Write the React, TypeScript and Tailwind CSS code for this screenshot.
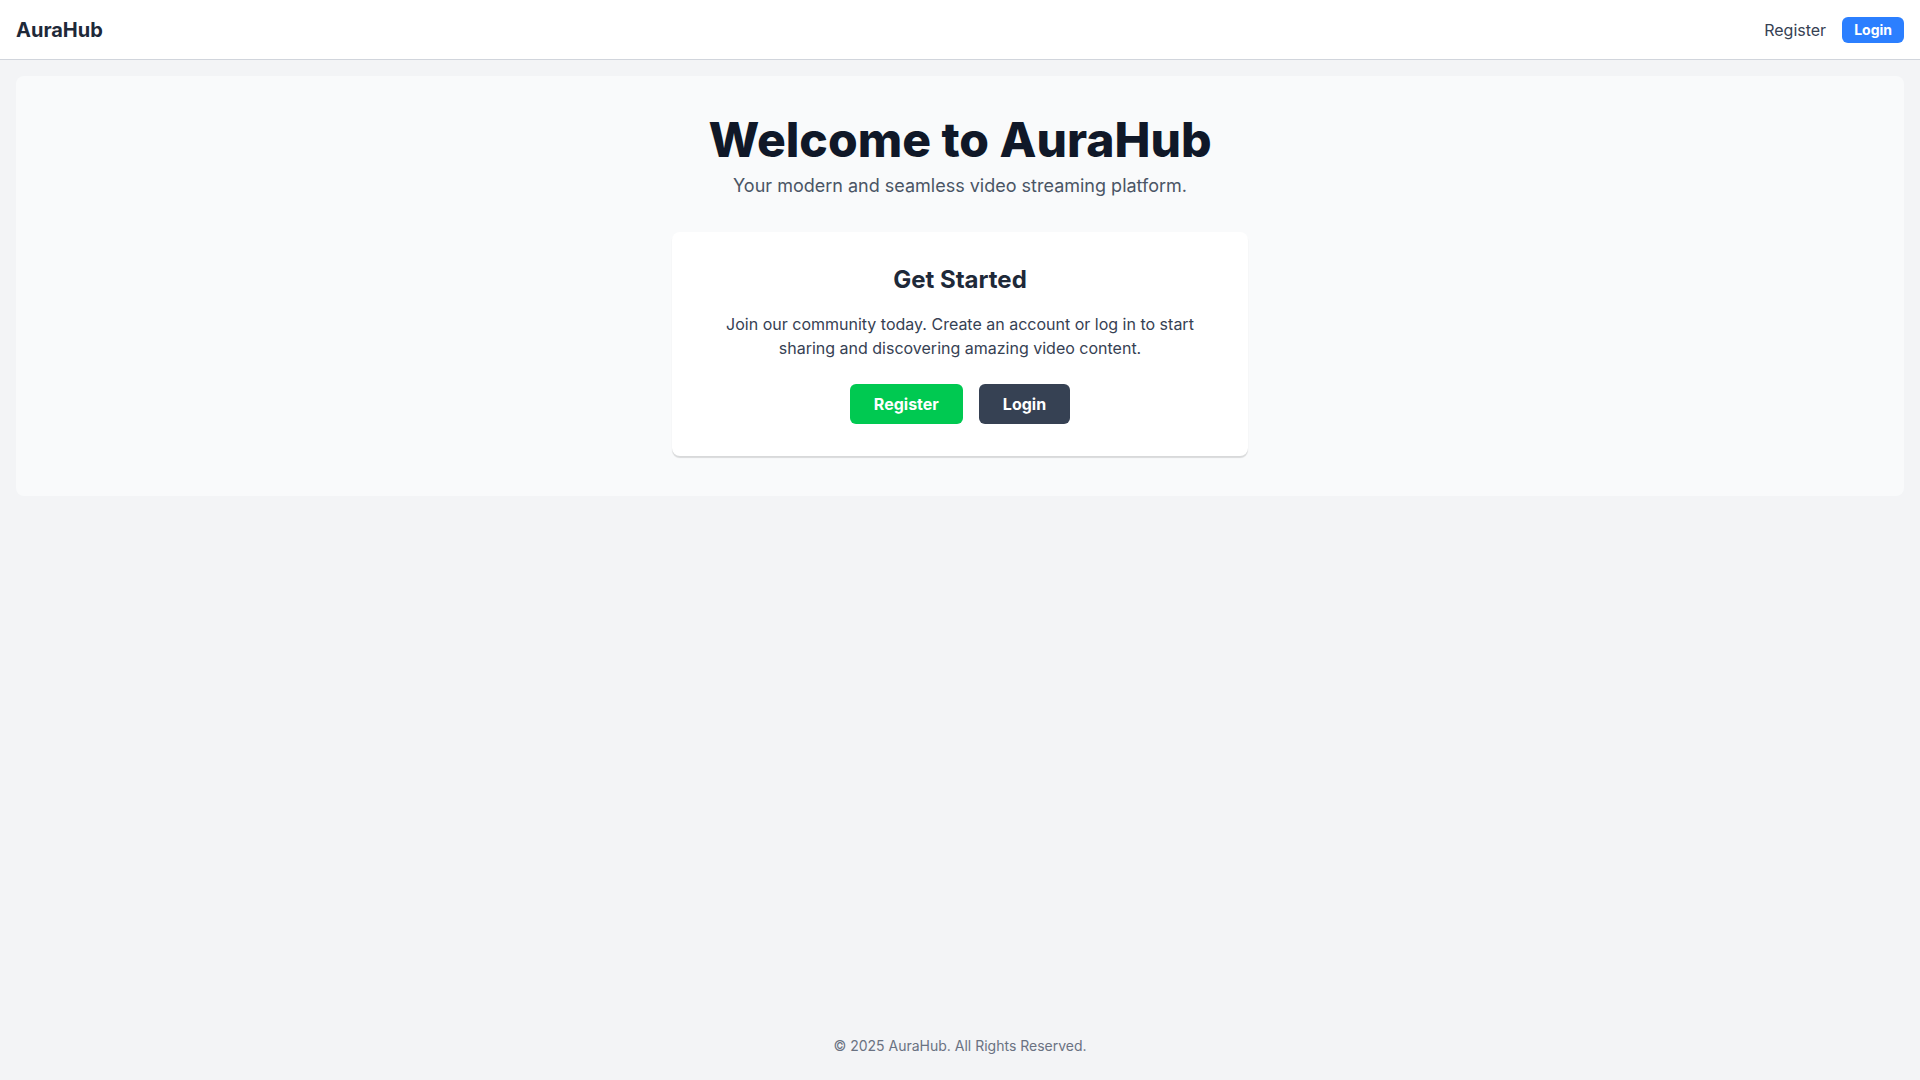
import React from "react";

const Header: React.FC = () => (
  <header className="flex h-[60px] items-center justify-between border-b border-gray-300 bg-white px-4">
    <a href="#" className="text-xl font-bold text-gray-800">
      AuraHub
    </a>
    <nav className="flex items-center gap-4">
      <a href="#" className="text-base text-gray-700">
        Register
      </a>
      <a
        href="#"
        className="flex h-[26px] items-center rounded-md bg-blue-500 px-3 text-sm font-bold text-white"
      >
        Login
      </a>
    </nav>
  </header>
);

const GetStartedCard: React.FC = () => (
  <div className="mx-auto mt-8 w-full max-w-xl rounded-lg bg-white p-8 text-center shadow-[0_2px_1px_0_rgba(0,0,0,0.13)]">
    <h2 className="mb-4 text-2xl font-bold text-gray-800">Get Started</h2>
    <p className="mb-6 text-base leading-6 text-gray-700">
      Join our community today. Create an account or log in to start sharing
      and discovering amazing video content.
    </p>
    <div className="flex justify-center gap-4">
      <button className="h-10 rounded-md bg-green-500 px-6 text-base font-bold text-white">
        Register
      </button>
      <button className="h-10 rounded-md bg-gray-700 px-6 text-base font-bold text-white">
        Login
      </button>
    </div>
  </div>
);

export default function App() {
  return (
    <div className="flex min-h-screen flex-col bg-gray-100 font-['Inter',sans-serif]">
      <Header />
      <main className="flex-1 p-4">
        <section className="rounded-lg bg-gray-50 p-10 text-center">
          <h1 className="text-5xl font-extrabold text-gray-900">
            Welcome to AuraHub
          </h1>
          <p className="mt-2 text-lg leading-7 text-gray-600">
            Your modern and seamless video streaming platform.
          </p>
          <GetStartedCard />
        </section>
      </main>
      <footer className="py-6 text-center text-sm text-gray-500">
        © 2025 AuraHub. All Rights Reserved.
      </footer>
    </div>
  );
}
